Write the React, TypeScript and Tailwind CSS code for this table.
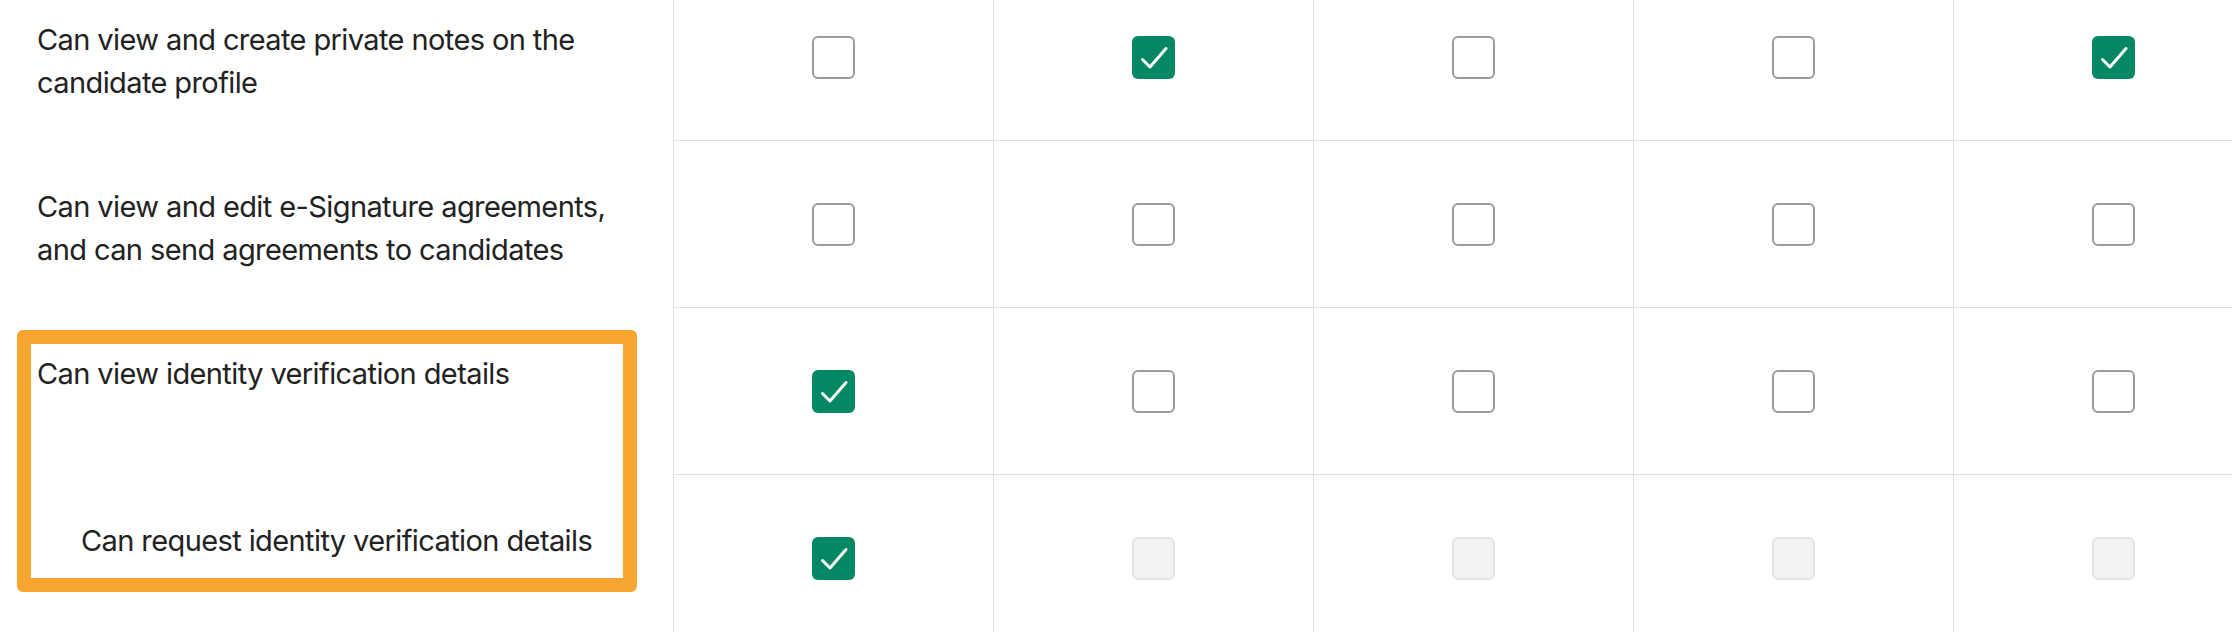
import React from "react";

type Box = "on" | "off" | "disabled";

interface PermissionRow {
  label: string;
  indent?: boolean;
  boxes: Box[];
}

const rows: PermissionRow[] = [
  {
    label: "Can view and create private notes on the candidate profile",
    boxes: ["off", "on", "off", "off", "on"],
  },
  {
    label: "Can view and edit e-Signature agreements, and can send agreements to candidates",
    boxes: ["off", "off", "off", "off", "off"],
  },
  {
    label: "Can view identity verification details",
    boxes: ["on", "off", "off", "off", "off"],
  },
  {
    label: "Can request identity verification details",
    indent: true,
    boxes: ["on", "disabled", "disabled", "disabled", "disabled"],
  },
];

function Checkbox({ state }: { state: Box }) {
  if (state === "on") {
    return (
      <div className="h-[43px] w-[43px] rounded-[6px] bg-[#048763]">
        <svg width="43" height="43" viewBox="0 0 43 43" fill="none">
          <path
            d="M10.5 23.5 L18 31 L34 12.5"
            stroke="#ffffff"
            strokeWidth="3"
            strokeLinecap="round"
            strokeLinejoin="round"
          />
        </svg>
      </div>
    );
  }
  if (state === "disabled") {
    return <div className="h-[43px] w-[43px] rounded-[6px] border-2 border-[#e3e3e3] bg-[#f2f2f2]" />;
  }
  return <div className="h-[43px] w-[43px] rounded-[6px] border-2 border-[#9b9b9b] bg-white" />;
}

export default function App() {
  return (
    <div
      className="relative h-[632px] w-[2232px] overflow-hidden bg-white text-[#222222]"
      style={{ fontFamily: "Inter, 'Liberation Sans', sans-serif" }}
    >
      <div className="-mt-[26px] w-[2273px]">
        {rows.map((row, i) => (
          <div key={i} className="grid h-[167px] grid-cols-[673px_repeat(5,320px)]">
            <div
              className={`pt-[44px] pr-[24px] text-[29px] leading-[43px] tracking-[-0.6px] ${
                row.indent ? "pl-[81px]" : "pl-[37px]"
              }`}
            >
              {row.label}
            </div>
            {row.boxes.map((b, j) => (
              <div
                key={j}
                className="flex items-center justify-center border-b border-l border-[#e0e0e0]"
              >
                <Checkbox state={b} />
              </div>
            ))}
          </div>
        ))}
      </div>

      {/* annotation box around the identity verification rows */}
      <div className="absolute left-[17px] top-[330px] h-[262px] w-[620px] rounded-[6px] border-[14px] border-[#f7a531]" />
    </div>
  );
}
